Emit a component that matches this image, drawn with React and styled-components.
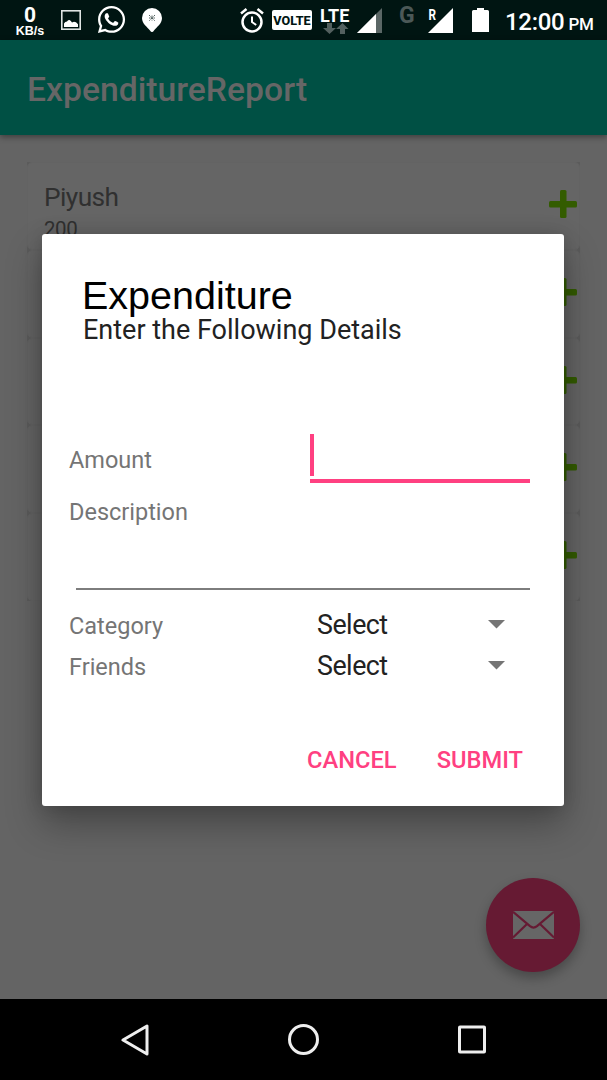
import React from "react"
import styled, { createGlobalStyle } from "styled-components"
import { FaWhatsapp } from "react-icons/fa"

const GlobalStyle = createGlobalStyle`
  * {
    box-sizing: border-box;
  }
  body {
    margin: 0;
    background: #000;
    font-family: Roboto, "Liberation Sans", sans-serif;
  }
  svg {
    display: block;
  }
`

const Screen = styled.div`
  position: relative;
  display: flex;
  flex-direction: column;
  width: 607px;
  height: 1080px;
  overflow: hidden;
`

const StatusBar = styled.header`
  display: flex;
  align-items: flex-start;
  height: 40px;
  background: #001512;
  color: #fff;
`

const StatusItem = styled.div`
  flex: none;
  width: ${props => props.$width}px;
  margin-left: ${props => props.$gap}px;
  padding-top: ${props => props.$top}px;
  white-space: nowrap;
`

const Speed = styled.div`
  display: flex;
  flex-direction: column;
  align-items: center;
  font-weight: 700;
  font-size: 21px;
  line-height: 20px;

  small {
    font-family: "Liberation Sans", sans-serif;
    font-size: 12.5px;
    line-height: 12px;
  }
`

const Volte = styled.div`
  height: 20px;
  border-radius: 2px;
  background: #fff;
  color: #001512;
  font-size: 12.6px;
  font-weight: 800;
  line-height: 21px;
  text-align: center;
`

const Lte = styled.div`
  font-size: 18px;
  font-weight: 700;
  letter-spacing: 0.2px;
  line-height: 19px;
  height: 17px;
`

const Carrier = styled.div`
  color: #4b5857;
  font-size: 23px;
  font-weight: 700;
  line-height: 23px;
`

const Clock = styled.div`
  font-size: 24px;
  font-weight: 500;
  letter-spacing: -0.3px;
  line-height: 30px;

  small {
    margin-left: 4px;
    font-size: 17px;
  }
`

const AppBar = styled.div`
  z-index: 1;
  display: flex;
  align-items: center;
  flex: none;
  height: 95px;
  padding: 4px 27px 0;
  background: #005044;
  color: #666;
  font-size: 33.7px;
  font-weight: 500;
  box-shadow: 0 2px 6px rgba(0, 0, 0, 0.4);
`

const Content = styled.main`
  flex: 1;
  padding: 27px 27px 0;
  background: #646464;
`

/* shows through the rounded corners of the cards */
const List = styled.ul`
  margin: 0;
  padding: 0;
  list-style: none;
  background: #5b5b5b;
`

const Card = styled.li`
  display: flex;
  justify-content: space-between;
  height: 87.8px;
  padding: 19px 2px 0 16px;
  border: 1px solid #636363;
  border-radius: 5px;
  background: #656565;
  color: #303030;
`

const Name = styled.div`
  font-size: 26.3px;
  letter-spacing: -0.6px;
  line-height: 30px;
`

const Total = styled.div`
  padding-top: 5px;
  font-size: 20.5px;
  letter-spacing: -0.4px;
  line-height: 24px;
`

const Fab = styled.button`
  position: absolute;
  right: 27px;
  bottom: 108px;
  display: grid;
  place-content: center;
  width: 94px;
  height: 94px;
  padding: 0;
  border: 0;
  border-radius: 50%;
  background: #661a33;
  box-shadow: 0 6px 12px rgba(0, 0, 0, 0.28);
`

const NavBar = styled.nav`
  display: flex;
  justify-content: space-between;
  flex: none;
  height: 81px;
  padding: 25px 119px 0 119px;
  background: #000;
`

const Overlay = styled.div`
  position: absolute;
  top: 41px;
  right: 0;
  bottom: 81px;
  left: 0;
  z-index: 2;
  display: flex;
  align-items: center;
  padding-left: 42px;
`

const Dialog = styled.section`
  width: 522px;
  height: 572px;
  padding: 41px 34px 0 27px;
  border-radius: 3px;
  background: #fff;
  box-shadow: 0 18px 36px rgba(0, 0, 0, 0.3), 0 0 18px rgba(0, 0, 0, 0.15);
`

const DialogHeader = styled.div`
  height: 159px;
  padding-left: 13px;

  h1 {
    margin: 0;
    color: #000;
    font-family: "Liberation Sans", Arial, sans-serif;
    font-size: 39.5px;
    font-weight: 400;
    line-height: 40px;
  }
  p {
    margin: 0;
    padding-left: 1px;
    color: #222;
    font-size: 27px;
    line-height: 30px;
  }
`

const Row = styled.div`
  display: flex;
  height: ${props => props.$height}px;
`

const Label = styled.label`
  width: 241px;
  padding-top: ${props => props.$top || 0}px;
  color: #757575;
  font-size: 23.5px;
  line-height: 28px;
`

const AmountField = styled.div`
  width: 220px;
  height: 49px;
  border-bottom: 4px solid #ff4081;

  &::before {
    content: "";
    display: block;
    width: 4px;
    height: 42px;
    background: #ff4081;
  }
`

const DescriptionField = styled.div`
  height: 65px;
  margin-left: 7px;
  margin-bottom: 21px;
  border-bottom: 2px solid #7d7d7d;
`

const Select = styled.div`
  display: flex;
  align-items: flex-start;
  justify-content: space-between;
  width: 195px;
  padding-left: 7px;
  color: #222;
  font-size: 26.8px;
  letter-spacing: -0.5px;
  line-height: 28px;

  svg {
    margin-top: 9px;
  }
`

const Actions = styled.div`
  display: flex;
  justify-content: flex-end;
  gap: 40px;
  padding: 54px 7px 0 0;
`

const Action = styled.button`
  padding: 0;
  border: 0;
  background: none;
  color: #ff4081;
  font-family: inherit;
  font-size: 23.7px;
  font-weight: 500;
  line-height: 28px;
`

const cards = [{ name: "Piyush", total: "200" }, {}, {}, {}, {}]

const choices = [
  { label: "Category", height: 40.5 },
  { label: "Friends", height: 40 },
]

function PictureIcon() {
  return (
    <svg width="20" height="20" viewBox="0 0 20 20">
      <rect x="0.8" y="0.8" width="18.4" height="18.4" fill="none" stroke="#dfe4e3" strokeWidth="1.6" />
      <path d="M3 17v-3.500q1-2 3-2 1-2 2.500-1.500 1.500 0.500 2.500 2.500l2-0.700 2 0.500 2 2V17z" fill="#fff" />
    </svg>
  )
}

function PinIcon() {
  return (
    <svg width="20" height="24" viewBox="0 0 20 24">
      <path d="M10 0a10 10 0 0 1 10 10c0 6-5.500 9-8 12.500Q10 25.500 8 22.500C5.500 19 0 16 0 10A10 10 0 0 1 10 0z" fill="#fff" />
      <path d="M7 7l6 6M13 7l-6 6M10 7.500v5M7 10h6" stroke="#52605e" strokeWidth="1" strokeDasharray="1.500 0.700" />
    </svg>
  )
}

function AlarmIcon() {
  return (
    <svg width="24" height="25" viewBox="0 0 24 25" fill="none" stroke="#fff">
      <circle cx="12" cy="14" r="9.500" strokeWidth="2.500" />
      <path d="M12 8.500V14l4.200 3" strokeWidth="2" />
      <path d="M1 5.500L6.500 1M23 5.500L17.500 1" strokeWidth="2.500" />
    </svg>
  )
}

function DataArrows() {
  return (
    <svg width="30" height="11" viewBox="0 0 30 11" fill="#53605f">
      <path d="M7 0h5v5h4l-6.500 6L3 5h4zM20 11h5V6h3.500L22.500 0 16 6h4z" />
    </svg>
  )
}

function SignalIcon({ weak }) {
  return (
    <svg width="25" height="25" viewBox="0 0 25 25">
      <path d="M25 0v25H0z" fill={weak ? "#5b6766" : "#fff"} />
      {weak && <path d="M19 6v19H0z" fill="#fff" />}
    </svg>
  )
}

function RoamingSignal() {
  return (
    <svg width="25" height="25" viewBox="0 0 25 25" fill="#fff">
      <text x="0.500" y="11.500" fontSize="14" fontWeight="700" textLength="7.500" lengthAdjust="spacingAndGlyphs">R</text>
      <path d="M25 0v25H0z" />
    </svg>
  )
}

function BatteryIcon() {
  return (
    <svg width="17" height="24" viewBox="0 0 17 24" fill="#fff">
      <path d="M5 0h7v2h3.500q1.500 0 1.500 1.500V24H0V3.500Q0 2 1.500 2H5z" />
    </svg>
  )
}

function PlusIcon() {
  return (
    <svg width="28" height="28" viewBox="0 0 28 28">
      <rect x="11" y="0" width="6.500" height="28" rx="1.500" fill="#335c00" />
      <rect x="0" y="11" width="28" height="6.500" rx="1.500" fill="#335c00" />
    </svg>
  )
}

function MailIcon() {
  return (
    <svg width="41" height="28" viewBox="0 0 41 28">
      <rect width="41" height="28" rx="0.800" fill="#666" />
      <path d="M0 0.800L17 15.200Q20.500 18 24 15.200L41 0.800M0 26.500L14 13M41 26.500L27 13" fill="none" stroke="#661a33" strokeWidth="2.200" />
    </svg>
  )
}

function Caret() {
  return (
    <svg width="17" height="9" viewBox="0 0 17 9">
      <path d="M0 0h17L8.500 8.500z" fill="#757575" />
    </svg>
  )
}

export default function App() {
  return (
    <Screen>
      <GlobalStyle />
      <StatusBar>
        <StatusItem $width={30} $gap={15} $top={5}>
          <Speed>
            0<small>KB/s</small>
          </Speed>
        </StatusItem>
        <StatusItem $width={20} $gap={16} $top={10}>
          <PictureIcon />
        </StatusItem>
        <StatusItem $width={30} $gap={15} $top={4}>
          <FaWhatsapp size={31} />
        </StatusItem>
        <StatusItem $width={20} $gap={16} $top={8}>
          <PinIcon />
        </StatusItem>
        <StatusItem $width={24} $gap={78} $top={8}>
          <AlarmIcon />
        </StatusItem>
        <StatusItem $width={40} $gap={8} $top={10}>
          <Volte>VOLTE</Volte>
        </StatusItem>
        <StatusItem $width={30} $gap={8} $top={6}>
          <Lte>LTE</Lte>
          <DataArrows />
        </StatusItem>
        <StatusItem $width={25} $gap={7} $top={8}>
          <SignalIcon weak />
        </StatusItem>
        <StatusItem $width={16} $gap={17} $top={4}>
          <Carrier>G</Carrier>
        </StatusItem>
        <StatusItem $width={25} $gap={13} $top={8}>
          <RoamingSignal />
        </StatusItem>
        <StatusItem $width={17} $gap={19} $top={8}>
          <BatteryIcon />
        </StatusItem>
        <StatusItem $width={90} $gap={16} $top={7}>
          <Clock>
            12:00<small>PM</small>
          </Clock>
        </StatusItem>
      </StatusBar>
      <AppBar>ExpenditureReport</AppBar>
      <Content>
        <List>
          {cards.map((card, i) => {
            return (
              <Card key={i}>
                <div>
                  <Name>{card.name}</Name>
                  <Total>{card.total}</Total>
                </div>
                <StatusItem as="span" $width={28} $gap={0} $top={8}>
                  <PlusIcon />
                </StatusItem>
              </Card>
            )
          })}
        </List>
        <Fab aria-label="Send mail">
          <MailIcon />
        </Fab>
      </Content>
      <NavBar>
        <svg width="32" height="32" viewBox="0 0 32 32">
          <path d="M4 16L28 2v28z" fill="none" stroke="#eee" strokeWidth="3" strokeLinejoin="round" />
        </svg>
        <svg width="32" height="32" viewBox="0 0 32 32">
          <circle cx="15.500" cy="15.500" r="14" fill="none" stroke="#eee" strokeWidth="3" />
        </svg>
        <svg width="32" height="32" viewBox="0 0 32 32">
          <rect x="3.500" y="3" width="25" height="25" rx="0.500" fill="none" stroke="#eee" strokeWidth="3" />
        </svg>
      </NavBar>
      <Overlay>
        <Dialog>
          <DialogHeader>
            <h1>Expenditure</h1>
            <p>Enter the Following Details</p>
          </DialogHeader>
          <Row $height={63}>
            <Label $top={12}>Amount</Label>
            <AmountField />
          </Row>
          <Row $height={28}>
            <Label $top={1}>Description</Label>
          </Row>
          <DescriptionField />
          {choices.map(choice => (
            <Row key={choice.label} $height={choice.height}>
              <Label $top={1}>{choice.label}</Label>
              <Select>
                Select
                <Caret />
              </Select>
            </Row>
          ))}
          <Actions>
            <Action>CANCEL</Action>
            <Action>SUBMIT</Action>
          </Actions>
        </Dialog>
      </Overlay>
    </Screen>
  )
}
